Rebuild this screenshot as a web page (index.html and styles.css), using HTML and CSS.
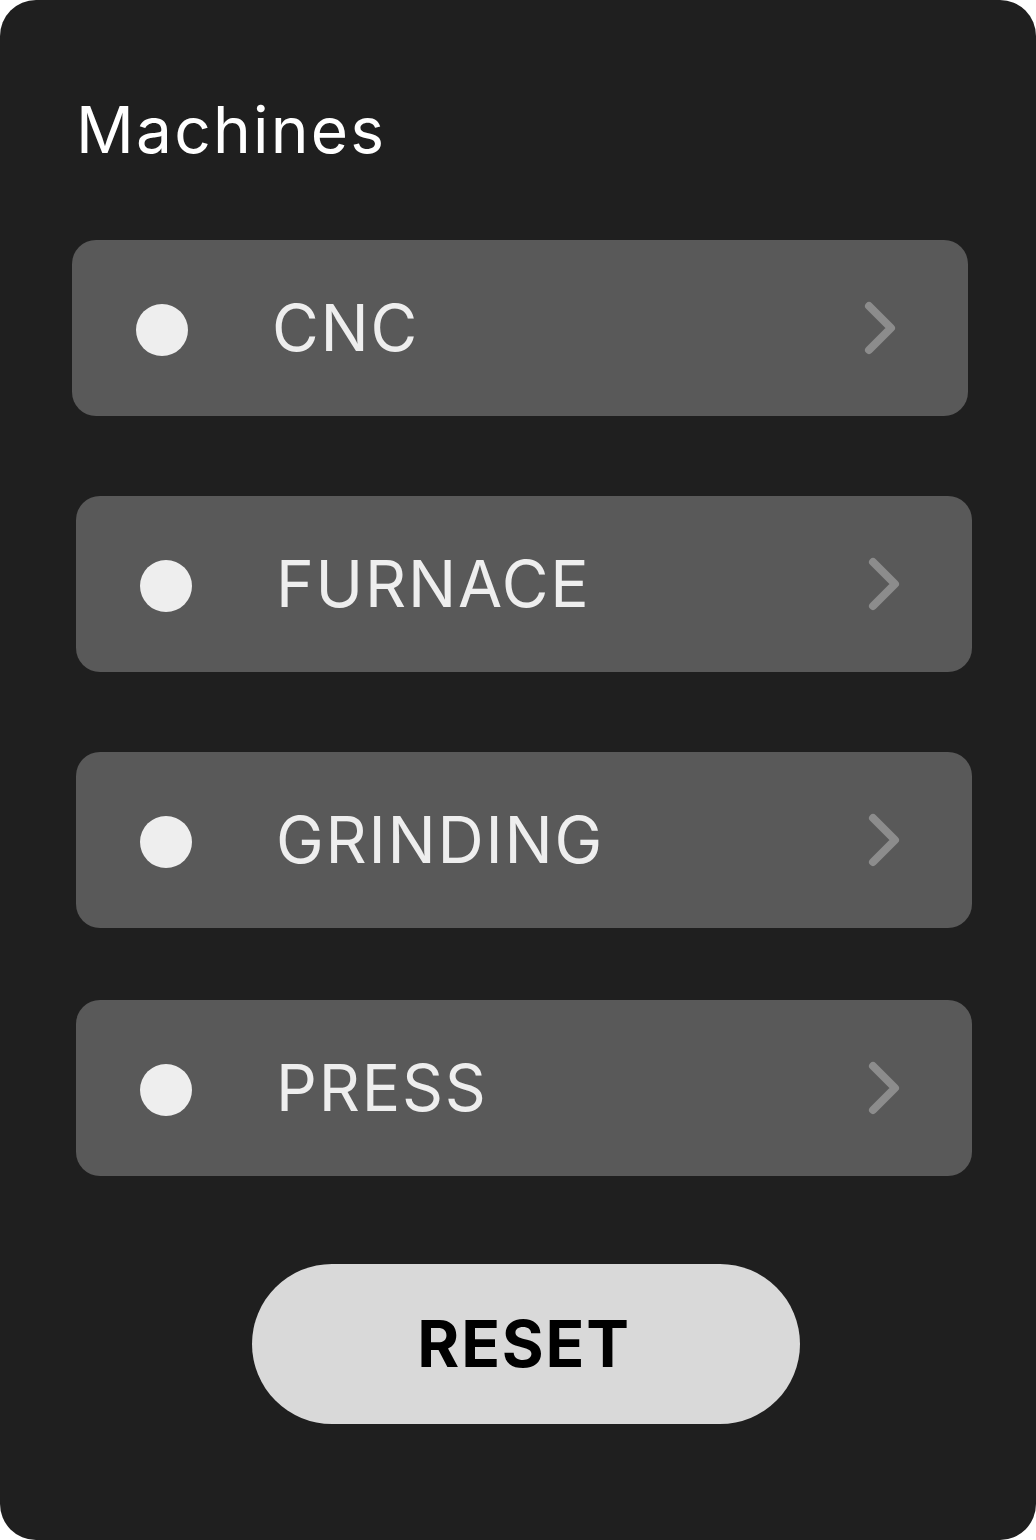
FILE: index.html
```html
<!DOCTYPE html>
<html lang="en">
<head>
<meta charset="utf-8">
<title>Machines</title>
<link rel="stylesheet" href="styles.css">
</head>
<body>
<div class="panel">
  <h1 class="title">Machines</h1>
  <ul class="list">
    <li class="card card--first">
      <span class="dot"></span>
      <span class="name">CNC</span>
      <svg class="chev" viewBox="0 0 32 56" width="32" height="56"><path d="M5 6 L27 28 L5 50" /></svg>
    </li>
    <li class="card">
      <span class="dot"></span>
      <span class="name">FURNACE</span>
      <svg class="chev" viewBox="0 0 32 56" width="32" height="56"><path d="M5 6 L27 28 L5 50" /></svg>
    </li>
    <li class="card">
      <span class="dot"></span>
      <span class="name">GRINDING</span>
      <svg class="chev" viewBox="0 0 32 56" width="32" height="56"><path d="M5 6 L27 28 L5 50" /></svg>
    </li>
    <li class="card card--last">
      <span class="dot"></span>
      <span class="name">PRESS</span>
      <svg class="chev" viewBox="0 0 32 56" width="32" height="56"><path d="M5 6 L27 28 L5 50" /></svg>
    </li>
  </ul>
  <div class="actions">
    <button class="reset" type="button">RESET</button>
  </div>
</div>
</body>
</html>
```
FILE: styles.css
```css
html, body {
  margin: 0;
  padding: 0;
  background: #ffffff;
}
body {
  font-family: Inter, "Noto Sans", "Liberation Sans", sans-serif;
}
.panel {
  box-sizing: border-box;
  width: 1036px;
  height: 1540px;
  background: #1f1f1f;
  border-radius: 36px;
  padding: 98px 64px 0 76px;
}
.title {
  margin: 0;
  font-size: 64px;
  line-height: 64px;
  font-weight: 400;
  color: #ffffff;
  letter-spacing: 2.2px;
}
.list {
  list-style: none;
  margin: 78px 0 0 0;
  padding: 0;
  display: flex;
  flex-direction: column;
  gap: 80px;
}
.card {
  box-sizing: border-box;
  height: 176px;
  background: #595959;
  border-radius: 24px;
  display: flex;
  align-items: center;
  padding: 0 72px 0 64px;
}
.card--first {
  margin-left: -4px;
  margin-right: 4px;
}
.card--last {
  margin-top: -8px;
}
.dot {
  flex: none;
  width: 52px;
  height: 52px;
  margin-top: 4px;
  border-radius: 50%;
  background: #eeeeee;
}
.name {
  flex: 1;
  margin-left: 84px;
  font-size: 64px;
  line-height: 64px;
  color: #eeeeee;
  letter-spacing: 1.8px;
}
.chev {
  flex: none;
  display: block;
}
.chev path {
  fill: none;
  stroke: #8c8c8c;
  stroke-width: 8;
  stroke-linecap: round;
  stroke-linejoin: round;
}
.actions {
  display: flex;
  justify-content: center;
  margin-top: 88px;
  padding-left: 4px;
}
.reset {
  box-sizing: border-box;
  width: 548px;
  height: 160px;
  border: none;
  border-radius: 80px;
  background: #d9d9d9;
  color: #000000;
  font-family: Inter, "Noto Sans", "Liberation Sans", sans-serif;
  font-size: 64px;
  font-weight: 700;
  line-height: 64px;
  letter-spacing: 1.8px;
  padding: 0 4px 0 0;
}
```
